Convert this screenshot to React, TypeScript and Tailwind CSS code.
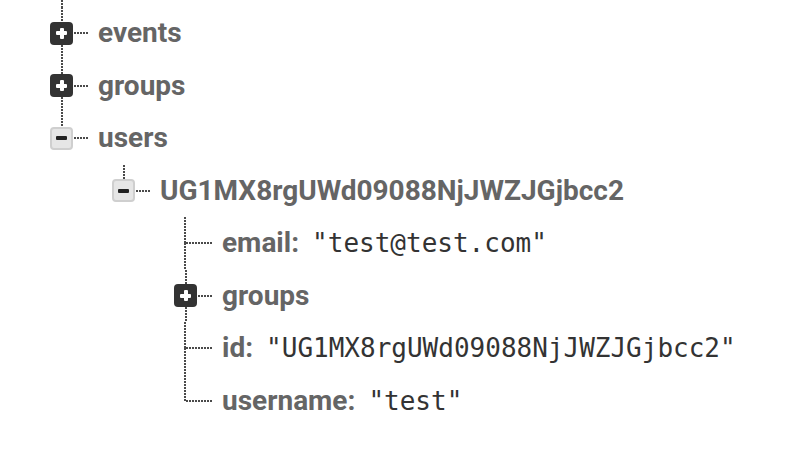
import React from "react";

// dotted connector lines of the tree
const vDots =
  "w-[2px] bg-[image:repeating-linear-gradient(to_bottom,#4a4a4a_0,#4a4a4a_2px,transparent_2px,transparent_3px)]";
const hDots =
  "h-[2px] bg-[image:repeating-linear-gradient(to_right,#4a4a4a_0,#4a4a4a_2px,transparent_2px,transparent_3px)]";

const keyFont = "font-['Roboto','Liberation_Sans',sans-serif] font-bold text-[28px] text-[#656565]";
const valFont = "font-['DejaVu_Sans_Mono','Liberation_Mono',monospace] text-[26px] text-[#333333]";

const PlusBox = () => (
  <div className="w-[23px] h-[23px] shrink-0 rounded-[4px] bg-[#333333] flex items-center justify-center relative">
    <div className="w-[11px] h-[4px] bg-white rounded-[1px]" />
    <div className="w-[4px] h-[11px] bg-white rounded-[1px] absolute" />
  </div>
);

const MinusBox = () => (
  <div className="w-[23px] h-[23px] shrink-0 rounded-[4px] bg-[#e6e6e6] border-2 border-[#cfcfcf] flex items-center justify-center">
    <div className="w-[11px] h-[4px] bg-[#222222] rounded-[1px]" />
  </div>
);

type BoxRowProps = {
  left: number;
  label: string;
  expanded?: boolean;
  lineBelow?: boolean;
};

const rowCls = "flex h-[52.5px] items-stretch";

const BoxRow: React.FC<BoxRowProps> = ({ left, label, expanded, lineBelow = true }) => (
  <div className={rowCls}>
    <div className="flex flex-col items-center w-[23px]" style={{ marginLeft: left }}>
      <div className={`flex-1 ${vDots}`} />
      {expanded ? <MinusBox /> : <PlusBox />}
      <div className={`flex-1 ${lineBelow ? vDots : "w-[2px]"}`} />
    </div>
    <div className={`self-center ml-[1px] w-[14px] ${hDots}`} />
    <div className={`self-center ml-[10px] leading-none ${keyFont}`}>{label}</div>
  </div>
);

const LeafRow: React.FC<{ label: string; value: string; last?: boolean }> = ({
  label,
  value,
  last,
}) => (
  <div className={rowCls}>
    <div className="flex flex-col ml-[184px]">
      <div className={`flex-1 ${vDots}`} />
      <div className={`flex-1 ${last ? "w-[2px]" : vDots}`} />
    </div>
    <div className={`self-center w-[27px] ${hDots}`} />
    <div className="self-center ml-[9px] flex items-baseline leading-none">
      <span className={keyFont}>{label}:</span>
      <span className={`ml-[13px] ${valFont}`}>"{value}"</span>
    </div>
  </div>
);

export default function App() {
  return (
    <div className="w-[800px] h-[455px] bg-white overflow-hidden">
      <div className="flex justify-center w-[23px] h-[7px] ml-[50px]">
        <div className={vDots} />
      </div>
      <BoxRow left={50} label="events" />
      <BoxRow left={50} label="groups" />
      <BoxRow left={50} label="users" expanded lineBelow={false} />
      <BoxRow left={112} label="UG1MX8rgUWd09088NjJWZJGjbcc2" expanded lineBelow={false} />
      <LeafRow label="email" value="test@test.com" />
      <BoxRow left={174} label="groups" />
      <LeafRow label="id" value="UG1MX8rgUWd09088NjJWZJGjbcc2" />
      <LeafRow label="username" value="test" last />
    </div>
  );
}
